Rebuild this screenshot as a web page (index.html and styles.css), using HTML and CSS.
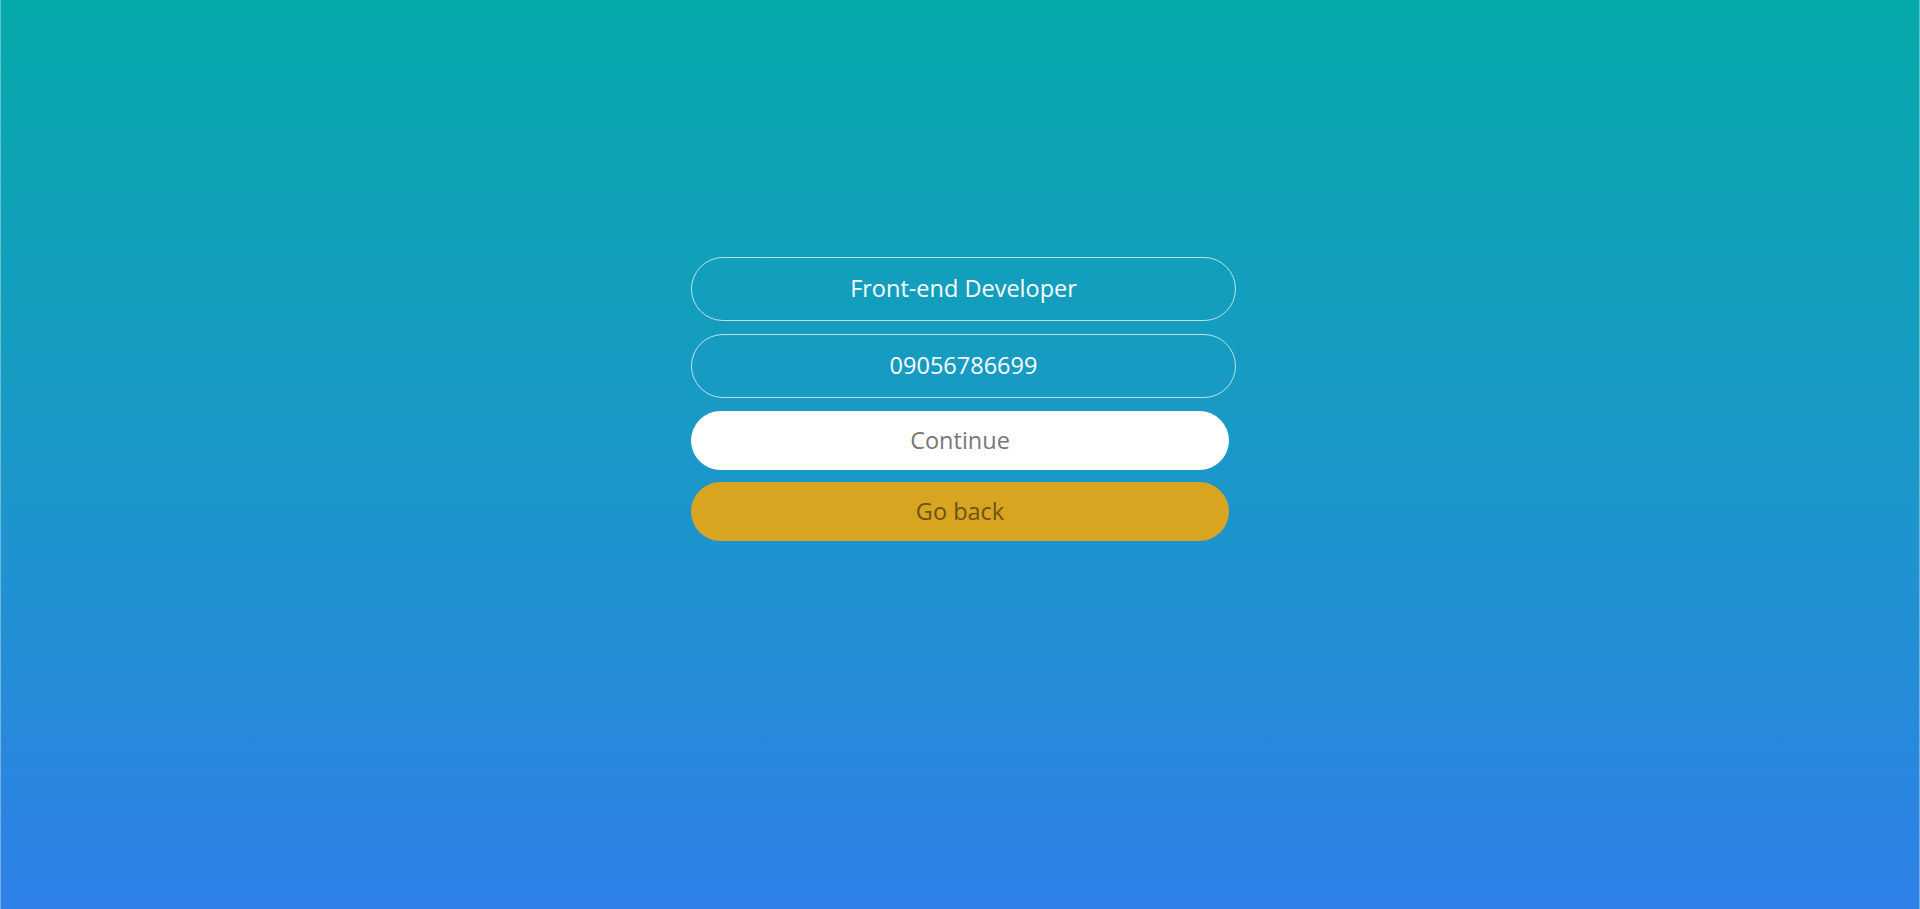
FILE: index.html
```html
<!DOCTYPE html>
<html lang="en">
<head>
<meta charset="utf-8">
<title>Form</title>
<link rel="stylesheet" href="styles.css">
</head>
<body>
<main class="page">
  <form class="form">
    <input class="field" type="text" value="Front-end Developer">
    <input class="field" type="text" value="09056786699">
    <button class="btn btn-continue" type="button">Continue</button>
    <button class="btn btn-back" type="button">Go back</button>
  </form>
</main>
</body>
</html>
```
FILE: styles.css
```css
html, body {
  margin: 0;
  padding: 0;
  height: 100%;
}
body {
  background: linear-gradient(to bottom, #05a9a9 0%, #1a98c8 50%, #2f80e8 100%);
  font-family: "Open Sans", "Noto Sans", sans-serif;
  box-sizing: border-box;
  border-left: 1px solid rgba(255,255,255,0.35);
  border-right: 1px solid rgba(255,255,255,0.35);
}
.page {
  display: flex;
  justify-content: center;
  padding-top: 257px;
}
.form {
  width: 538px;
  display: flex;
  flex-direction: column;
  gap: 13px;
}
.field {
  width: 545px;
  height: 64px;
  box-sizing: border-box;
  border: 1px solid rgba(255,255,255,0.7);
  border-radius: 32px;
  background: transparent;
  color: #fff;
  text-align: center;
  font-family: inherit;
  font-size: 23.5px;
  outline: none;
  padding: 0 20px 2px;
}
.btn {
  width: 538px;
  height: 59px;
  border: none;
  border-radius: 30px;
  font-family: inherit;
  font-size: 23.5px;
  padding-bottom: 2px;
  cursor: pointer;
}
.btn-continue {
  background: #fff;
  color: #777;
}
.btn-back {
  background: #d9a521;
  color: #6a5316;
  margin-top: -1px;
}
```
